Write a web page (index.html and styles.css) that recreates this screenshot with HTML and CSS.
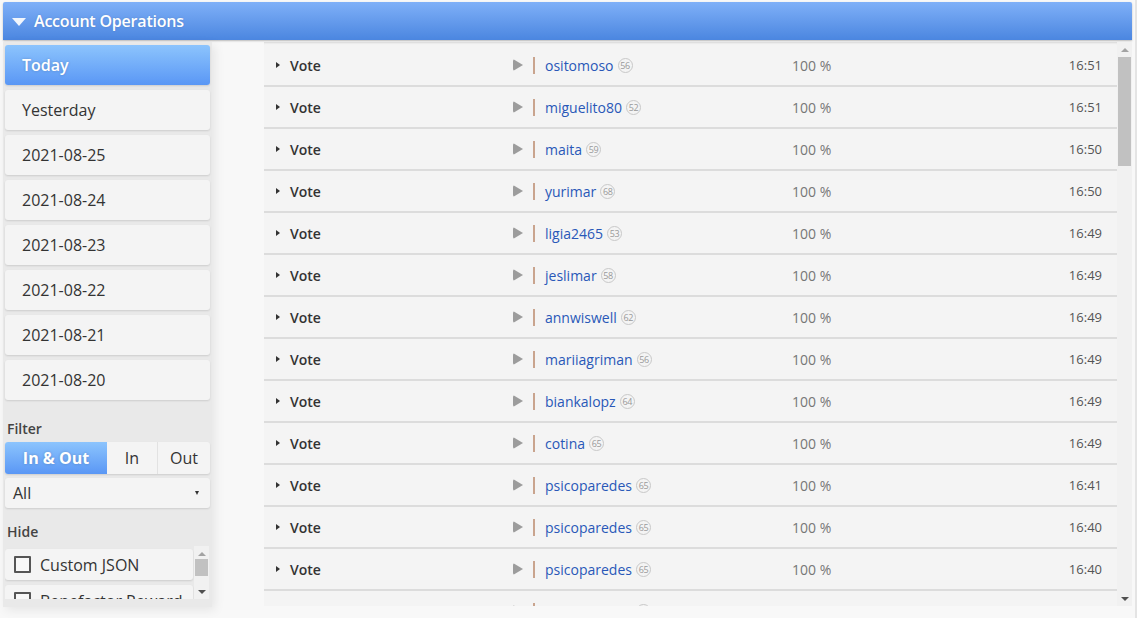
FILE: index.html
```html
<!DOCTYPE html>
<html lang="en">
<head>
<meta charset="utf-8">
<title>Account Operations</title>
<link rel="stylesheet" href="styles.css">
</head>
<body>
<div class="app">
  <header class="panel-head">
    <span class="head-caret"></span>
    <span class="head-title">Account Operations</span>
  </header>
  <div class="content">
    <aside class="sidebar">
      <div class="day day-active">Today</div>
      <div class="day">Yesterday</div>
      <div class="day">2021-08-25</div>
      <div class="day">2021-08-24</div>
      <div class="day">2021-08-23</div>
      <div class="day">2021-08-22</div>
      <div class="day">2021-08-21</div>
      <div class="day">2021-08-20</div>
      <div class="label label-filter">Filter</div>
      <div class="segmented">
        <div class="seg seg-active">In &amp; Out</div>
        <div class="seg seg-in">In</div>
        <div class="seg seg-out">Out</div>
      </div>
      <div class="select"><span>All</span><span class="select-arrow"></span></div>
      <div class="label label-hide">Hide</div>
      <div class="hide-box">
        <div class="hide-list">
          <div class="check"><span class="box"></span>Custom JSON</div>
          <div class="check"><span class="box"></span>Benefactor Reward</div>
        </div>
        <div class="mini-scroll">
          <span class="arr-up"></span>
          <span class="mini-thumb"></span>
          <span class="arr-down"></span>
        </div>
      </div>
    </aside>
    <main class="ops">
      <div class="ops-list" id="ops"></div>
      <div class="vscroll">
        <span class="arr-up"></span>
        <span class="thumb"></span>
        <span class="arr-down"></span>
      </div>
    </main>
  </div>
</div>
<script>
  var rows = [
    ["ositomoso", 56, "16:51"],
    ["miguelito80", 52, "16:51"],
    ["maita", 59, "16:50"],
    ["yurimar", 68, "16:50"],
    ["ligia2465", 53, "16:49"],
    ["jeslimar", 58, "16:49"],
    ["annwiswell", 62, "16:49"],
    ["mariiagriman", 56, "16:49"],
    ["biankalopz", 64, "16:49"],
    ["cotina", 65, "16:49"],
    ["psicoparedes", 65, "16:41"],
    ["psicoparedes", 65, "16:40"],
    ["psicoparedes", 65, "16:40"],
    ["psicoparedes", 65, "16:40"]
  ];
  var html = "";
  rows.forEach(function (r) {
    html += '<div class="op">' +
      '<span class="op-caret"></span>' +
      '<span class="op-type">Vote</span>' +
      '<span class="op-play"></span>' +
      '<span class="op-bar"></span>' +
      '<span class="op-user">' + r[0] + '</span>' +
      '<span class="rep">' + r[1] + '</span>' +
      '<span class="op-pct">100 %</span>' +
      '<span class="op-time">' + r[2] + '</span>' +
      '</div>';
  });
  document.getElementById("ops").innerHTML = html;
</script>
</body>
</html>
```

FILE: styles.css
```css
* { box-sizing: border-box; }

html, body {
  margin: 0;
  height: 100%;
}

body {
  background: #f8f8f8;
  font-family: "Open Sans", "Noto Sans", "Liberation Sans", sans-serif;
  color: #333;
  overflow: hidden;
}

.app {
  padding: 2px 3px 0 3px;
  height: 618px;
  border-right: 2px solid #e4e4e4;
}

/* title bar */
.panel-head {
  height: 38px;
  display: flex;
  align-items: center;
  background: linear-gradient(#7fb0f8, #4b86e0);
  border-radius: 2px 2px 0 0;
  box-shadow: 0 1px 2px rgba(0,0,0,0.25);
  padding-left: 9px;
}

.head-caret {
  width: 0;
  height: 0;
  border-left: 7px solid transparent;
  border-right: 7px solid transparent;
  border-top: 8px solid #f2f6fc;
  margin-right: 8px;
  margin-top: 1px;
}

.head-title {
  color: #fff;
  font-weight: 600;
  font-size: 16px;
  letter-spacing: -0.2px;
  text-shadow: 0 0 2px rgba(0,0,0,0.15);
}

.content {
  display: flex;
  gap: 52px;
  margin-top: 2px;
  height: 564px;
}

/* left column */
.sidebar {
  width: 209px;
  flex: none;
  background: #e9e9e9;
  padding: 3px 2px 0 2px;
  display: flex;
  flex-direction: column;
  height: 565px;
  box-shadow: 3px 3px 10px rgba(0,0,0,0.08);
}

.day {
  height: 40px;
  margin-bottom: 5px;
  background: #f4f4f4;
  border-radius: 3px;
  box-shadow: 0 1px 2px rgba(0,0,0,0.12);
  display: flex;
  align-items: center;
  padding-left: 17px;
  font-size: 16px;
  color: #333;
}

.day-active {
  background: linear-gradient(#8cc4fd, #5a97f5);
  color: #fff;
  font-weight: 600;
  text-shadow: 0 0 3px rgba(0,0,0,0.2);
}

.label {
  font-size: 14px;
  font-weight: 600;
  color: #444;
  padding-left: 2px;
}

.label-filter { margin-top: 14px; height: 23px; line-height: 19px; }
.label-hide { margin-top: 14px; height: 24px; line-height: 20px; }

.segmented {
  display: flex;
  height: 32px;
  border-radius: 3px;
  box-shadow: 0 1px 2px rgba(0,0,0,0.12);
  background: #f4f4f4;
  overflow: hidden;
}

.seg {
  display: flex;
  align-items: center;
  justify-content: center;
  font-size: 16px;
  color: #333;
}

.seg-active {
  width: 102px;
  background: linear-gradient(#8cc4fd, #5a97f5);
  color: #fff;
  font-weight: 700;
  text-shadow: 0 0 3px rgba(0,0,0,0.2);
}

.seg-in { width: 51px; border-right: 1px solid #e2e2e2; }
.seg-out { flex: 1; }

.select {
  margin-top: 4px;
  height: 30px;
  background: #f4f4f4;
  border-radius: 3px;
  box-shadow: 0 1px 2px rgba(0,0,0,0.12);
  display: flex;
  align-items: center;
  justify-content: space-between;
  padding: 0 11px 0 8px;
  font-size: 16px;
}

.select-arrow {
  width: 0;
  height: 0;
  border-left: 2.5px solid transparent;
  border-right: 2.5px solid transparent;
  border-top: 4px solid #333;
}

.hide-box {
  display: flex;
  height: 53px;
  overflow: hidden;
}

.hide-list {
  width: 188px;
  display: flex;
  flex-direction: column;
  gap: 5px;
  padding-top: 3px;
}

.check {
  height: 31px;
  flex: none;
  background: #f4f4f4;
  border-radius: 3px;
  box-shadow: 0 1px 2px rgba(0,0,0,0.12);
  display: flex;
  align-items: center;
  padding-left: 9px;
  font-size: 16px;
  color: #333;
  white-space: nowrap;
  overflow: hidden;
}

.box {
  width: 17px;
  height: 17px;
  border: 2px solid #555;
  border-radius: 1px;
  margin-right: 9px;
  background: #f8f8f8;
}

.mini-scroll {
  width: 15px;
  margin-left: 1px;
  background: #f1f1f1;
  display: flex;
  flex-direction: column;
  align-items: center;
}

.mini-thumb {
  width: 13px;
  height: 17px;
  background: #c1c1c1;
  margin-top: 3px;
}

.arr-up, .arr-down {
  width: 0;
  height: 0;
  border-left: 4px solid transparent;
  border-right: 4px solid transparent;
}

.arr-up { border-bottom: 4px solid #a3a3a3; margin-top: 6px; }
.arr-down { border-top: 4px solid #505050; margin-top: auto; margin-bottom: 5px; }

/* operations list */
.ops {
  flex: 1;
  display: flex;
  height: 564px;
  background: #f4f4f4;
}

.ops-list {
  flex: 1;
  overflow: hidden;
  padding-top: 3px;
  box-shadow: inset 0 2px 2px -1px rgba(0,0,0,0.12);
}

.op {
  height: 42px;
  display: flex;
  align-items: center;
  border-bottom: 2px solid #dcdcdc;
  background: #f4f4f4;
  font-size: 14px;
}

.op-caret {
  width: 0;
  height: 0;
  border-top: 3.5px solid transparent;
  border-bottom: 3.5px solid transparent;
  border-left: 4px solid #333;
  margin-left: 12px;
  margin-right: 10px;
}

.op-type {
  font-weight: 600;
  color: #333;
  width: 223px;
}

.op-play {
  width: 0;
  height: 0;
  border-top: 6px solid transparent;
  border-bottom: 6px solid transparent;
  border-left: 10px solid #9c9c9c;
  border-radius: 2px;
  margin-right: 10px;
}

.op-bar {
  width: 2px;
  height: 17px;
  background: #c9a48e;
  margin-right: 10px;
}

.op-user {
  color: #2958b8;
  margin-right: 4px;
}

.rep {
  width: 15px;
  height: 15px;
  border: 1px solid #c8c8c8;
  border-radius: 50%;
  font-size: 9px;
  color: #999;
  display: flex;
  align-items: center;
  justify-content: center;
  letter-spacing: -0.4px;
}

.op-pct {
  color: #777;
  font-size: 14px;
  margin-left: auto;
  width: 190px;
}

.op-time {
  color: #555;
  font-size: 13px;
  width: 120px;
  text-align: right;
  margin-right: 15px;
}

.vscroll {
  width: 15px;
  flex: none;
  background: #f1f1f1;
  display: flex;
  flex-direction: column;
  align-items: center;
}

.vscroll .thumb {
  width: 13px;
  height: 109px;
  background: #c1c1c1;
  margin-top: 5px;
}

.vscroll .arr-up { margin-top: 6px; }
.vscroll .arr-down { margin-bottom: 5px; }
```
